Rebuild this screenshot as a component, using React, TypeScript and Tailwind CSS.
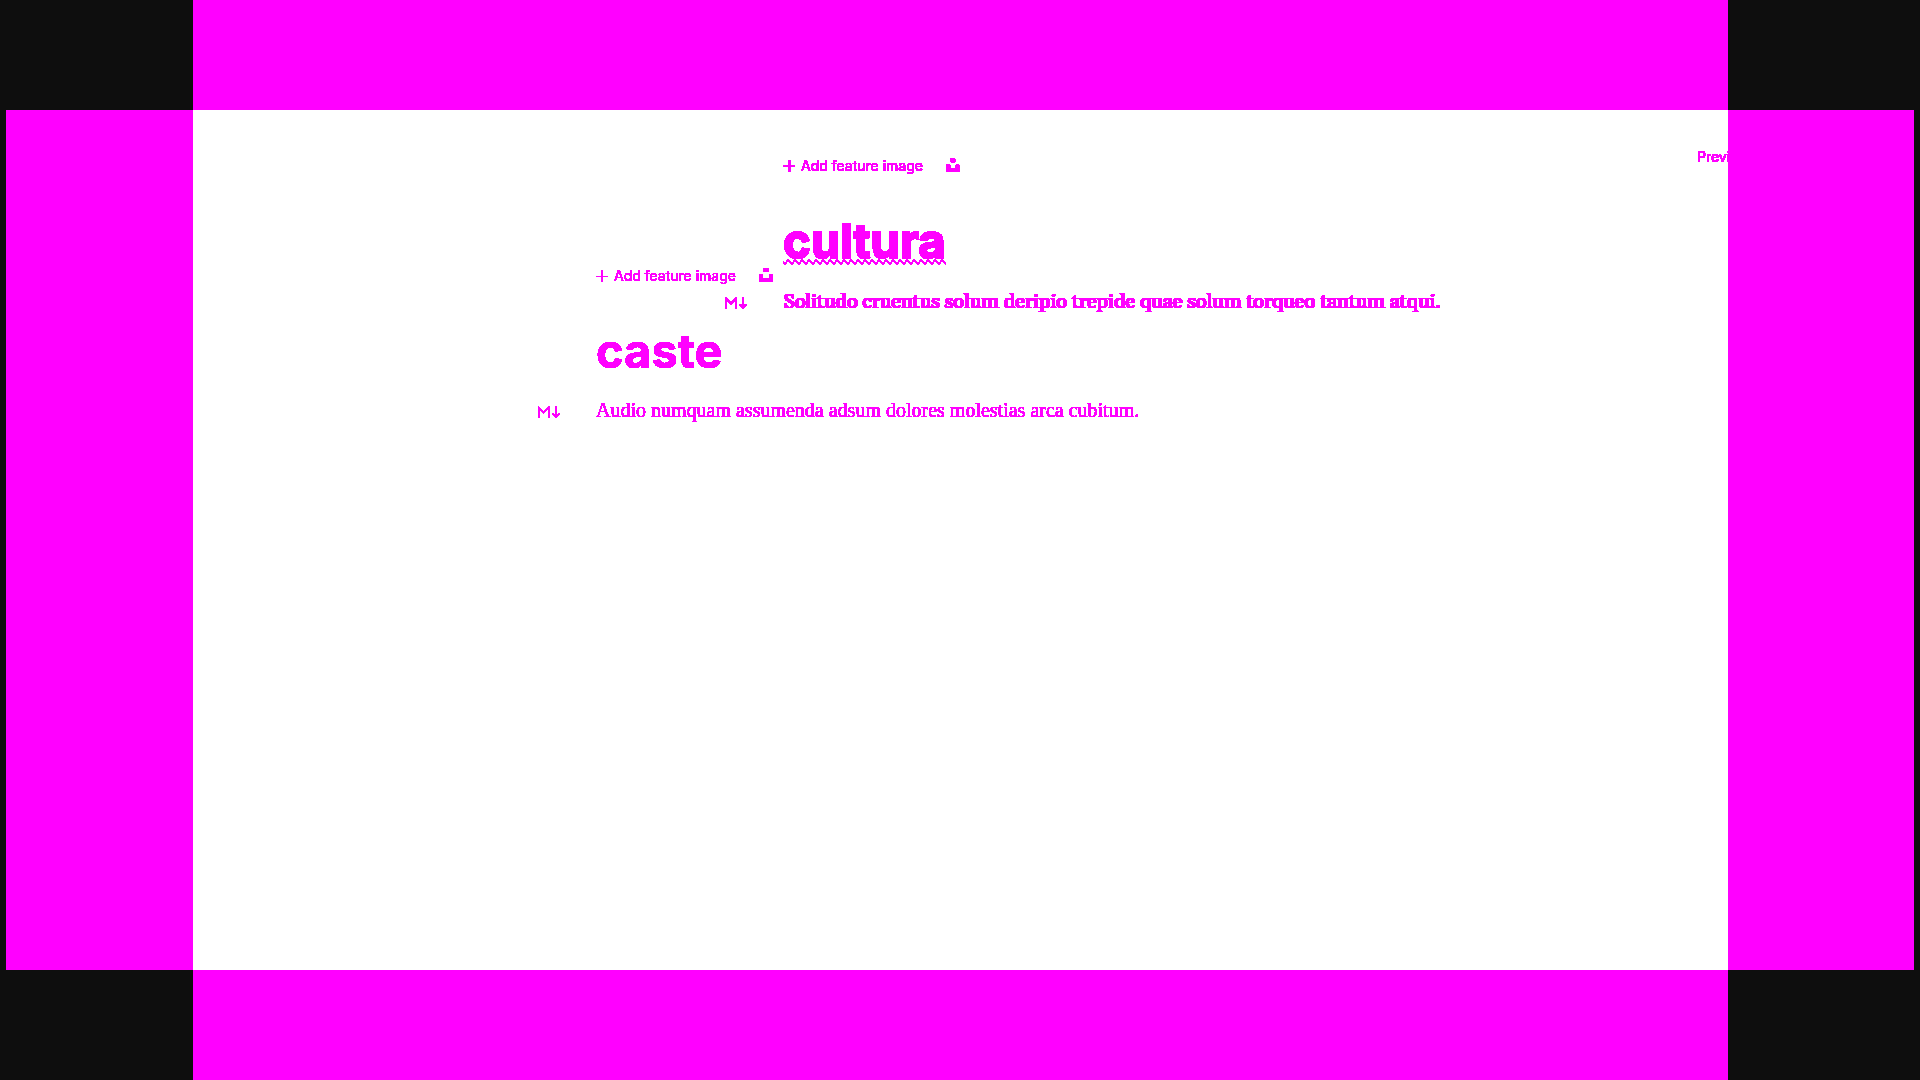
function PlusIcon({ bold }: { bold: boolean }) {
  return (
    <svg viewBox="0 0 12 12" className="h-3 w-3" fill="#ff00ff" shapeRendering="crispEdges" aria-hidden="true">
      <path d={bold ? "M5 0h3v5h4v2H8v5H5V7H0V5h5z" : "M5 0h2v6h5v1H7v5H5V7H0V6h5z"} />
    </svg>
  );
}

function UnsplashIcon({ bold }: { bold: boolean }) {
  return (
    <svg viewBox="0 0 14 14" className="h-3.5 w-3.5" fill="#ff00ff" shapeRendering="crispEdges" aria-hidden="true">
      <path d={bold ? "M4 0h5v1h1v3H9v1H5V4H4zM0 6h4v1h1v3h4V7h1V6h3v1h1v7H0z" : "M4 0h6v4H4zM0 6h4v4h6V6h4v8H0z"} />
    </svg>
  );
}

function MarkdownIcon() {
  return (
    <svg viewBox="0 0 22 12" className="h-3 w-[22px]" fill="none" stroke="#ff00ff" strokeWidth="1.4" aria-hidden="true">
      <path d="M0.7 11.5V1.5l5 5 5-5v10M18 0.5v10.5M14.7 7.5l3.3 3.3 3.3-3.3" />
    </svg>
  );
}

type EditorProps = {
  title: string;
  body: string;
  bold?: boolean;
  className: string;
};

function Editor({ title, body, bold = false, className }: EditorProps) {
  return (
    <article className={"col-start-1 row-start-1 " + className}>
      <div className="flex h-6 items-center gap-[23px]">
        <button type="button" className="flex items-center gap-1.5 text-sm leading-6">
          <PlusIcon bold={bold} />
          <span>Add feature image</span>
        </button>
        <button type="button" aria-label="Unsplash" className="pb-0.5">
          <UnsplashIcon bold={bold} />
        </button>
      </div>
      <h1
        className={
          "mt-9 text-[47px] leading-[54px] font-bold " +
          (bold
            ? "underline decoration-wavy decoration-1 underline-offset-1 [-webkit-text-stroke:1px_#ff00ff] [text-shadow:0_1px_#ff00ff]"
            : "")
        }
      >
        {title}
      </h1>
      <div className="mt-[18px] -ml-[58px] flex items-center gap-9">
        <button type="button" aria-label="Markdown">
          <MarkdownIcon />
        </button>
        <p
          className={
            "text-xl leading-7 whitespace-nowrap " +
            (bold
              ? "pt-0.5 pb-1 font-[Gelasio,'Liberation_Serif',serif] [text-shadow:1px_0_#ff00ff]"
              : "pb-1 font-['Liberation_Serif',serif]")
          }
        >
          {body}
        </p>
      </div>
    </article>
  );
}

export default function App() {
  return (
    <div className="grid min-h-screen grid-cols-[6px_187px_minmax(0,1fr)_186px_6px] grid-rows-[110px_1fr_110px] bg-[#0e0e0e] font-[Inter,sans-serif] text-[#ff00ff]">
      <svg className="absolute h-0 w-0" aria-hidden="true">
        <filter id="edge-full" colorInterpolationFilters="sRGB">
          <feComponentTransfer>
            <feFuncA type="linear" slope="255" intercept="-1" />
          </feComponentTransfer>
        </filter>
        <filter id="edge-light" colorInterpolationFilters="sRGB">
          <feComponentTransfer>
            <feFuncA type="linear" slope="255" intercept="-12" />
          </feComponentTransfer>
        </filter>
      </svg>
      <div className="col-start-3 row-start-1 bg-[#ff00ff]" />
      <div className="col-start-2 row-start-2 bg-[#ff00ff]" />
      <main className="col-start-3 row-start-2 bg-white">
        <div className="grid grid-cols-1">
          <Editor
            bold
            title="cultura"
            body="Solitudo cruentus solum deripio trepide quae solum torqueo tantum atqui."
            className="pt-11 pl-[590px] [filter:url(#edge-full)]"
          />
          <Editor
            title="caste"
            body="Audio numquam assumenda adsum dolores molestias arca cubitum."
            className="pt-[154px] pl-[403px] [filter:url(#edge-light)]"
          />
          <button
            type="button"
            className="col-start-1 row-start-1 mt-9 w-[31px] self-start justify-self-end text-left text-sm leading-[22px] whitespace-nowrap [filter:url(#edge-full)]"
          >
            Preview
          </button>
        </div>
      </main>
      <div className="col-start-4 row-start-2 bg-[#ff00ff]" />
      <div className="col-start-3 row-start-3 bg-[#ff00ff]" />
    </div>
  );
}
